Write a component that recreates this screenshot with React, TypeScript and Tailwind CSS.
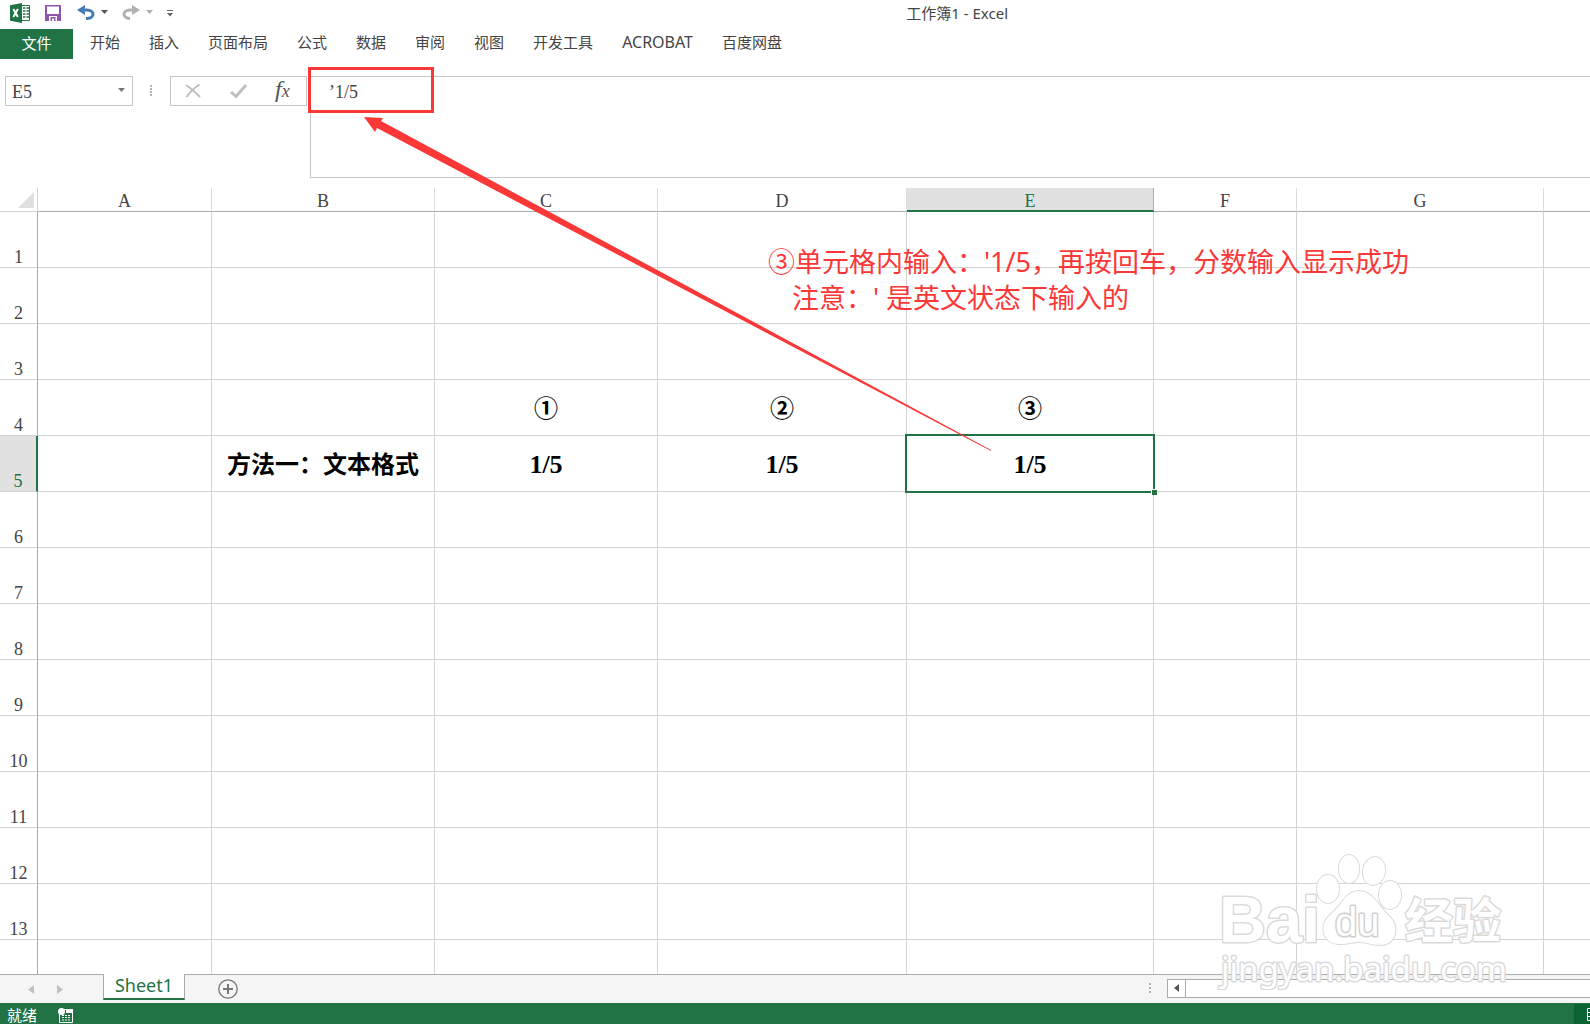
import React from "react";

const COLUMNS = [
  { name: "A", width: "w-[174px]" },
  { name: "B", width: "w-[223px]" },
  { name: "C", width: "w-[223px]" },
  { name: "D", width: "w-[249px]" },
  { name: "E", width: "w-[247px]" },
  { name: "F", width: "w-[143px]" },
  { name: "G", width: "w-[247px]" },
  { name: "", width: "w-auto" },
];

const ROWS = [1, 2, 3, 4, 5, 6, 7, 8, 9, 10, 11, 12, 13];

const CELLS: Record<string, string> = {
  C4: "①",
  D4: "②",
  E4: "③",
  B5: "方法一：文本格式",
  C5: "1/5",
  D5: "1/5",
  E5: "1/5",
};

const TABS = ["开始", "插入", "页面布局", "公式", "数据", "审阅", "视图", "开发工具", "ACROBAT", "百度网盘"];

const SERIF = "font-['Liberation_Serif','Noto_Sans_CJK_SC',serif]";

function Caret({ className }: { className: string }) {
  return (
    <svg width="7" height="4" viewBox="0 0 7 4" className={className} aria-hidden="true">
      <path d="M0 0h7L3.500 4z" fill="currentColor" />
    </svg>
  );
}

function TitleBar() {
  return (
    <header className="relative flex h-[29px] items-center pb-[3px] pl-[10px]">
      <svg width="21" height="20" viewBox="0 0 21 20" aria-hidden="true">
        <path d="M11 2.500h8.500v15H11z" fill="#fff" stroke="#217346" />
        <path d="M13 5h2.500M13 8h2.500M13 11h2.500M13 14h2.500M16.500 5H19M16.500 8H19M16.500 11H19M16.500 14H19" stroke="#217346" strokeWidth="1.500" />
        <path d="M0 2.200 12 0v20L0 17.800z" fill="#217346" />
        <path d="m3.300 6 4.600 8M7.900 6l-4.600 8" stroke="#fff" strokeWidth="2" />
      </svg>
      <button aria-label="保存" className="ml-[14px]">
        <svg width="16" height="16" viewBox="0 0 16 16" aria-hidden="true">
          <path d="M0 0h16v16H0z" fill="#8e57ad" />
          <path d="M2 1.500h12V9H2z" fill="#fff" />
          <path d="M4 11h8v5h-1.500v-4h-5v4H4zM7 13.500h2V16H7z" fill="#fff" />
        </svg>
      </button>
      <button aria-label="撤消" className="ml-[16px] flex items-center gap-[6px] text-[#555]">
        <svg width="18" height="16" viewBox="0 0 18 16" aria-hidden="true">
          <path d="M3 5h7c8 0 8 8.500 0 8.500H9" fill="none" stroke="#4679b4" strokeWidth="3" />
          <path d="M8 0v3.200L5.500 5 8 6.800V10L0 5z" fill="#4679b4" />
        </svg>
        <Caret className="mt-[-3px]" />
      </button>
      <button aria-label="恢复" className="ml-[14px] flex items-center gap-[6px] text-[#b0b0b0]">
        <svg width="18" height="16" viewBox="0 0 18 16" aria-hidden="true">
          <path d="M15 5H8c-8 0-8 8.500 0 8.500" fill="none" stroke="currentColor" strokeWidth="3" />
          <path d="M10 0v3.200L12.500 5 10 6.800V10l8-5z" fill="currentColor" />
        </svg>
        <Caret className="mt-[-3px]" />
      </button>
      <button aria-label="自定义快速访问工具栏" className="ml-[14px]">
        <svg width="6" height="7" viewBox="0 0 6 7" aria-hidden="true">
          <path d="M0 0h6v1H0zM0 3h6L3 6.500z" fill="#666" />
        </svg>
      </button>
      <h1 className="absolute left-[57%] top-[2px] text-[15px] leading-[22px] text-[#444]">工作簿1 - Excel</h1>
    </header>
  );
}

function RibbonTabs() {
  return (
    <nav className="flex h-[30px] items-center gap-[29px] text-[15px] leading-5 text-[#444]">
      <button className="mr-[-12px] h-[30px] w-[73px] bg-[#217346] pb-0.5 text-white">文件</button>
      {TABS.map((t) => (
        <button key={t} className={t === "ACROBAT" ? "pb-1 text-[16px] leading-5" : "whitespace-nowrap pb-1"}>
          {t}
        </button>
      ))}
    </nav>
  );
}

function FormulaBar() {
  return (
    <section className="mt-[17px] flex h-[112px] items-start pl-[5px]">
      <div className="flex h-[30px] w-[128px] items-center border border-[#c6c6c6] pr-[7px]">
        <input
          aria-label="名称框"
          defaultValue="E5"
          className={`${SERIF} min-w-0 flex-1 pl-[6px] pt-0.5 text-lg leading-6 text-[#444] outline-none`}
        />
        <Caret className="mb-0.5 text-[#777]" />
      </div>
      <svg width="2" height="11" viewBox="0 0 2 11" className="ml-[17px] mt-[9px]" aria-hidden="true">
        <path d="M0 0h2v2H0zM0 3h2v2H0zM0 6h2v2H0zM0 9h2v2H0z" fill="#b0b0b0" />
      </svg>
      <div className="ml-[18px] flex h-[30px] w-[137px] items-center border border-[#c6c6c6] pl-[14px]">
        <button aria-label="取消">
          <svg width="16" height="14" viewBox="0 0 16 14" aria-hidden="true">
            <path d="M1 1c5 3 10 8 14 12M14.500 .500C9 4 5 8 1.500 13" fill="none" stroke="#bdbdbd" strokeWidth="2" />
          </svg>
        </button>
        <button aria-label="输入" className="ml-[29px]">
          <svg width="17" height="14" viewBox="0 0 17 14" aria-hidden="true">
            <path d="m1 8 5 4.500L16 1" fill="none" stroke="#c0c0c0" strokeWidth="3" />
          </svg>
        </button>
        <button aria-label="插入函数" className={`${SERIF} ml-[28px] text-2xl leading-6 italic text-[#555]`}>
          f<span className="text-lg">x</span>
        </button>
      </div>
      <div className="relative ml-[3px] flex-1">
        <textarea
          aria-label="编辑栏"
          defaultValue="’1/5"
          className={`${SERIF} block h-[102px] w-full resize-none border border-r-0 border-[#c6c6c6] pl-[18px] pt-[3px] text-lg leading-6 text-[#444] outline-none`}
        />
        <div className="absolute left-[-2px] top-[-9px] h-[46px] w-[126px] border-3 border-[#fb3838]" />
      </div>
    </section>
  );
}

function Sheet() {
  return (
    <main className="relative h-[787px] overflow-hidden border-b border-[#ababab]">
      <table className={`${SERIF} w-full table-fixed border-separate border-spacing-0`}>
        <colgroup>
          <col className="w-[38px]" />
          {COLUMNS.map((c, i) => (
            <col key={i} className={c.width} />
          ))}
        </colgroup>
        <thead>
          <tr className="h-[24px] text-lg leading-5 text-[#444]">
            <th aria-label="全选" className="border-b border-r border-[#d4d4d4] p-0 pr-[3px]">
              <svg width="16" height="16" viewBox="0 0 16 16" className="ml-auto" aria-hidden="true">
                <path d="M16 0v16H0z" fill="#dfdfdf" />
              </svg>
            </th>
            {COLUMNS.map((c, i) => (
              <th
                key={i}
                className={
                  c.name === "E"
                    ? "border-b-2 border-r border-b-[#217346] border-r-[#ababab] bg-[#e1e1e1] p-0 pt-1 leading-[18px] font-normal text-[#217346]"
                    : "border-b border-r border-b-[#ababab] border-r-[#dcdcdc] p-0 pt-[3px] font-normal last:border-r-0"
                }
              >
                {c.name}
              </th>
            ))}
          </tr>
        </thead>
        <tbody>
          {[...ROWS, 14].map((r) => (
            <tr key={r} className="h-[56px]">
              <th
                className={
                  r === 5
                    ? "border-b border-r-2 border-b-[#d4d4d4] border-r-[#217346] bg-[#e1e1e1] p-0 align-bottom text-lg leading-5 font-normal text-[#217346]"
                    : "border-b border-r border-b-[#d4d4d4] border-r-[#ababab] p-0 align-bottom text-lg leading-5 font-normal text-[#444]"
                }
              >
                {r < 14 ? r : ""}
              </th>
              {COLUMNS.map((c, i) => {
                const id = c.name + r;
                const text = CELLS[id] ?? "";
                return (
                  <td
                    key={i}
                    className="relative border-b border-r border-[#d4d4d4] p-0 pt-0.5 text-center text-2xl leading-8 font-bold whitespace-nowrap text-black last:border-r-0"
                  >
                    {text === "1/5" ? <span className="text-[26px]">{text}</span> : text}
                    {id === "E5" && (
                      <span className="absolute -inset-x-0.5 -top-0.5 -bottom-0.5 z-10 border-2 border-[#217346]">
                        <span className="absolute -right-1 -bottom-1 size-[6px] border-l border-t border-white bg-[#217346]" />
                      </span>
                    )}
                  </td>
                );
              })}
            </tr>
          ))}
        </tbody>
      </table>
      <p className="absolute left-[768px] top-[56px] text-[27px] leading-9 whitespace-nowrap text-[#fb3838]">
        <span className="block">③单元格内输入：'1/5，再按回车，分数输入显示成功</span>
        <span className="block pl-6">注意：' 是英文状态下输入的</span>
      </p>
    </main>
  );
}

function Watermark() {
  return (
    <svg
      width="300"
      height="140"
      viewBox="0 0 300 140"
      className="pointer-events-none absolute right-[74px] bottom-[34px] z-10"
      role="img"
      aria-label="Baidu 经验"
    >
      <g fill="#fff" stroke="#dadada" strokeWidth="2" paintOrder="stroke" strokeLinejoin="round">
        <ellipse cx="112" cy="39" rx="11" ry="14" />
        <ellipse cx="133" cy="19" rx="10" ry="14" />
        <ellipse cx="158" cy="21" rx="11" ry="14" transform="rotate(10 158 21)" />
        <ellipse cx="174" cy="45" rx="11" ry="14" />
        <path d="M143 41c-14 0-17 15-29 24-12 10-7 30 10 29 9 0 12-2 19-2s12 3 21 3c16 0 20-17 10-28-11-10-17-26-31-26z" />
        <g fontFamily="'Liberation Sans','Noto Sans CJK SC',sans-serif" fontWeight="700" strokeWidth="3">
          <text x="3" y="92" fontSize="65">Bai</text>
          <text x="119" y="86" fontSize="40" fontWeight="400" stroke="#d0d0d0">du</text>
          <text x="189" y="88" fontSize="48" fontFamily="'Noto Sans CJK SC',sans-serif">经验</text>
          <text x="5" y="131" fontSize="33" fontWeight="400" fontFamily="'Noto Sans',sans-serif">jingyan.baidu.com</text>
        </g>
      </g>
    </svg>
  );
}

function SheetTabs() {
  return (
    <div className="flex h-[28px] bg-[#f5f5f5] pl-[28px] text-[#c0c0c0]">
      <button aria-label="上一张工作表">
        <svg width="6" height="9" viewBox="0 0 6 9" aria-hidden="true"><path d="M6 0v9L0 4.500z" fill="currentColor" /></svg>
      </button>
      <button aria-label="下一张工作表" className="ml-[23px]">
        <svg width="6" height="9" viewBox="0 0 6 9" aria-hidden="true"><path d="M0 0v9l6-4.500z" fill="currentColor" /></svg>
      </button>
      <button className="relative z-10 ml-[40px] mt-[-1px] h-[26px] w-[82px] border-x border-b-2 border-x-[#ababab] border-b-[#217346] bg-white pb-[3px] text-lg leading-5 text-[#217346]">
        Sheet1
      </button>
      <button aria-label="新工作表" className="ml-[33px]">
        <svg width="20" height="20" viewBox="0 0 20 20" aria-hidden="true">
          <circle cx="10" cy="10" r="9.200" fill="none" stroke="#777" strokeWidth="1.300" />
          <path d="M10 5v10M5 10h10" stroke="#777" strokeWidth="2" />
        </svg>
      </button>
      <div className="ml-auto flex w-[441px] items-center pb-0.5">
        <svg width="2" height="11" viewBox="0 0 2 11" aria-hidden="true">
          <path d="M0 0h2v2H0zM0 4h2v2H0zM0 8h2v2H0z" fill="#b0b0b0" />
        </svg>
        <button aria-label="向左滚动" className="ml-[16px] flex h-[19px] w-[19px] items-center justify-center border border-[#ababab] bg-white text-[#555]">
          <svg width="5" height="8" viewBox="0 0 5 8" aria-hidden="true"><path d="M5 0v8L0 4z" fill="currentColor" /></svg>
        </button>
        <div className="h-[19px] flex-1 border-y border-[#ababab] bg-white" />
      </div>
    </div>
  );
}

function StatusBar() {
  return (
    <footer className="flex h-[21px] items-center overflow-hidden bg-[#217346] pl-[7px] text-[15px] text-white">
      <span className="pt-0.5 leading-5">就绪</span>
      <svg width="15" height="15" viewBox="0 0 15 15" className="ml-[21px] mt-[4px]" aria-hidden="true">
        <path d="M1.500 5v9.500h13V1.500H6" fill="none" stroke="#fff" />
        <path d="M8 1h7v4H8z" fill="#fff" />
        <circle cx="3.500" cy="3.500" r="3.500" fill="#fff" />
        <path d="M4 7.500h9M4 9.500h9M4 12h9" stroke="#fff" strokeDasharray="2 1" />
      </svg>
      <button aria-label="普通视图" className="ml-auto h-[20px] w-[16px] self-end overflow-hidden bg-[#0a6332] pl-[13px]">
        <svg width="15" height="13" viewBox="0 0 15 13" className="max-w-none" aria-hidden="true">
          <path d="M.500 .500h14v12H.500zM0 4.500h15M0 8.500h15M5 0v13" fill="none" stroke="#fff" />
        </svg>
      </button>
    </footer>
  );
}

export default function App() {
  return (
    <div lang="zh-CN" className="relative min-h-screen overflow-hidden bg-white font-['Noto_Sans','Noto_Sans_CJK_SC',sans-serif]">
      <TitleBar />
      <RibbonTabs />
      <FormulaBar />
      <Sheet />
      <SheetTabs />
      <StatusBar />
      <svg width="630" height="340" viewBox="0 0 630 340" className="pointer-events-none absolute left-[363px] top-[114px] z-20" aria-hidden="true">
        <path d="M1 3 20 4 18 7 628 336v1L14 14l-2 4z" fill="#fb3838" />
      </svg>
      <Watermark />
    </div>
  );
}
